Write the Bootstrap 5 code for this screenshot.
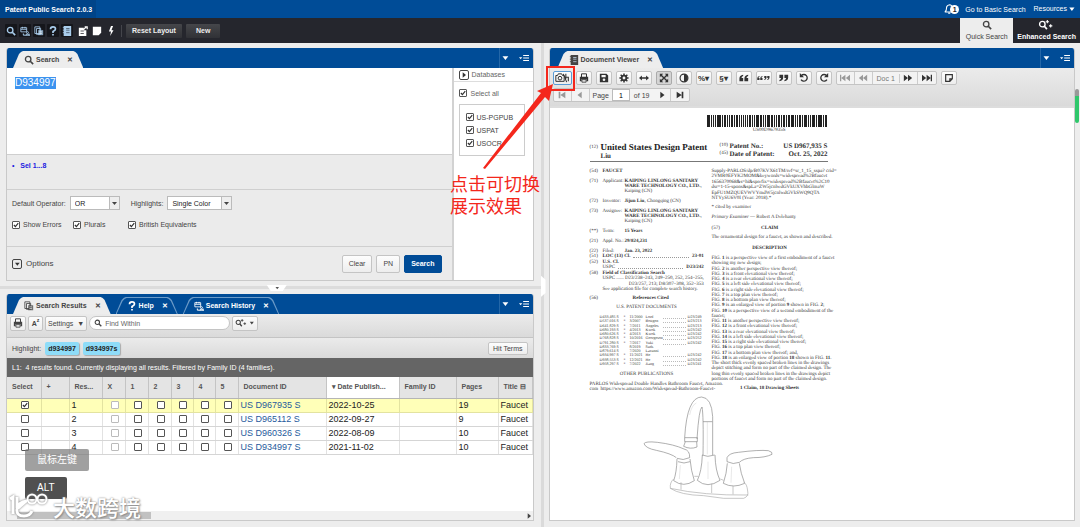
<!DOCTYPE html>
<html lang="en">
<head>
<meta charset="utf-8">
<meta name="viewport" content="width=device-width, initial-scale=1">
<title>Patent Public Search 2.0.3</title>
<link href="https://cdn.jsdelivr.net/npm/bootstrap@5.3.0/dist/css/bootstrap.min.css" rel="stylesheet">
<style>
:root{--blue:#004c97;--line:#c9c9c9;--ink:#444}
body{font:7px/9px "Liberation Sans","Noto Sans CJK SC",sans-serif;color:var(--ink);background:#ededed}
svg.ic{width:10px;height:10px;fill:none;stroke:currentColor;stroke-width:1.6;flex:none;display:block}
svg .f{fill:currentColor;stroke:none}
a{text-decoration:none}
.topbar{background:var(--blue);height:18px;color:#fff}
.topbar a{color:#fff}
.alertno{width:9px;height:9px;border-radius:50%;background:#fff;color:#222;margin-left:-4px;font-weight:700}
.brand-box{background:#004489;height:18px;padding:0 4px 0 5px;font-weight:700}
.toolbar-dark{background:#25262d;height:25px;color:#fff}
.sq{border:0;background:none;color:#fff;width:12px;height:13px;padding:1px;border-radius:1px}
.sq.on{background:#15161b;color:#a9cdec}
.btn-dark2{background:linear-gradient(#45464a,#303136);color:#eee;border:0;border-radius:1px;font-size:7px;line-height:9px;font-weight:700;height:14px;padding:0 6px}
.vsep{width:1px;height:12px;background:#44454b}
.mode{border:0;height:25px;font-size:7px;line-height:9px;padding:2px 4px;background:none;color:#fff;font-weight:700}
.mode.on{background:#ededed;color:#444;width:53px;font-weight:400}
.workspace{padding:5px 5px 6px 6px;min-height:0}
.pane{border:1px solid var(--line);border-top:0;border-radius:3px 3px 0 0;min-width:0;overflow:hidden;background:#fff}
.tabbar{background:var(--blue);height:20px;padding-left:6px;color:#fff}
.tabx{position:relative;height:17px;padding:0 10px 0 11px;gap:2px;font-weight:700;z-index:0;font-size:7px;color:#fff;border:0;background:none}
.tabx .x{margin-left:6px}
.tabx::before,.tabx::after{content:"";position:absolute;z-index:-1;clip-path:polygon(0 100%,6px 3px,8px 1px,10px 0,calc(100% - 10px) 0,calc(100% - 8px) 1px,calc(100% - 6px) 3px,100% 100%)}
.tabx::before{inset:0;background:#6c9bc8}
.tabx::after{inset:1px 1px 0;background:var(--blue)}
.tabx.active{color:var(--ink)}
.tabx.active::before,.tabx.active::after{background:#ededed}
.tabctl{border-left:1px solid #2467a8;height:20px;width:34px}
.ghost{border:0;background:none;color:inherit;padding:0}
.query{border:0;height:86px;padding:9px 8px;font-size:10px;line-height:12px;resize:none;width:100%;color:#111;outline:0;display:block}
.query::selection{background:#3c93ef;color:#fff}
.graybox{background:#ebebeb;border-top:1px solid #cfcfcf}
.status{height:35px;color:#2020e0;font-weight:700;padding:6px 5px}
.opts{height:57px;padding:6px 5px}
.foot{height:34px;padding:0 10px 0 5px;gap:4px}
.cb{appearance:none;width:8px;height:8px;border:1px solid #555;border-radius:1px;background:#fff;margin:0;flex:none;display:block}
.cb:checked{background:#fff url("data:image/svg+xml,%3Csvg xmlns='http://www.w3.org/2000/svg' viewBox='0 0 8 8'%3E%3Cpath d='M1.2 4l2 2.2L7 1.5' fill='none' stroke='%23333' stroke-width='1.6'/%3E%3C/svg%3E")}
.combo{appearance:none;border:1px solid #bbb;border-radius:0;height:14px;font-size:7px;line-height:9px;color:#222;padding:0 12px 0 4px;background:#fff url("data:image/svg+xml,%3Csvg xmlns='http://www.w3.org/2000/svg' width='10' height='12'%3E%3Cpath fill='%23eee' d='M0 0h10v12H0z'/%3E%3Cpath fill='%23bbb' d='M0 0h1v12H0z'/%3E%3Cpath fill='%23444' d='M3 5h5L5.500 8z'/%3E%3C/svg%3E") right top no-repeat}
.dbcol{width:81px;border-left:2px solid #d2d2d2;padding:0 8px 0 5px;background:#fff}
.dbhead{height:14px;margin:0 -8px 0 -5px;padding:0 5px;border-bottom:1px solid #ddd;color:#666}
.dbbox{border:1px solid #ccc;height:52px;padding:0 6px}
.expand{width:10px;height:10px;border:1px solid #444;border-radius:2px;background:none;padding:0;color:#333}
.bx{border:1px solid #c4c4c4;border-radius:2px;background:linear-gradient(#fdfdfd,#ededed);font-size:7px;line-height:9px;color:var(--ink);height:15px;padding:0 4px;display:flex;align-items:center;justify-content:center;flex:none}
.bx.main{background:var(--blue);color:#fff;border-color:var(--blue);font-weight:700}
.tall{height:18px;padding:0 6px}
.grad{background:linear-gradient(#ebebeb,#dadada)}
.rtools{height:24px;padding:0 3px 5px;border-bottom:1px solid #c4c4c4}
.rhl{height:20px;padding:0 5px 0 5px}
.find{width:141px;height:14px;border:1px solid #c4c4c4;border-radius:7px;background:#fff;padding:0 4px}
.find input{border:0;outline:0;font-size:7px;line-height:9px;padding:0;width:110px;background:none}
.find input::placeholder{color:#666}
.chip{background:#8edcf8;color:#222;border-radius:2px;height:13px;padding:2px 3px;box-shadow:1px 1px 1px #aaa;font-weight:700}
.l1{background:#656565;color:#fff;height:19px;padding:0 5px}
.hits{table-layout:fixed;width:100%;border-collapse:collapse;font-size:9px;line-height:10px;color:#222}
.hits th{height:21px;background:#e4e4e4;border-right:1px solid #c4c4c4;border-bottom:1px solid #b5b5b5;font-size:7px;color:#555;padding:0 0 0 5px;white-space:nowrap;overflow:hidden}
.hits td{height:14px;padding:0 0 0 2px;border-right:1px solid #e2e2e2;border-bottom:1px solid #d5d5d5;white-space:nowrap;overflow:hidden}
.hits td .cb{margin:auto}
.hits .dim{border-color:#bbb}
.hits th.sorted{background:#fff}
.hits tr.sel td{background:#ffffb8;border-color:#e3e3a0}
.hits a{color:#1f5a9c}
.hscroll{height:9px;background:#f0f0f0}
.hscroll i{display:block;width:134px;height:7px;background:#c1c1c1;margin-left:10px}
.hsplit{height:13px;margin-left:-6px;position:relative}
.hsplit::before{content:"";position:absolute;left:0;right:-8px;top:5px;height:3px;background:#dcdcdc}
.vsplit{width:15px;position:relative;margin:-5px 0 -6px}
.vsplit::before{content:"";position:absolute;left:7px;width:3px;top:0;bottom:0;background:#dadada}
.grip{position:absolute;border:0;padding:0;background:#fff;color:#555}
.grip.h{left:50%;top:4px;width:20px;height:6px;clip-path:polygon(0 0,100% 0,80% 100%,20% 100%)}
.grip.v{left:7px;top:48%;width:5px;height:22px;clip-path:polygon(0 0,100% 20%,100% 80%,0 100%)}
.dtools{padding:3px 3px 4px;gap:3px}
.dtools .bx{height:14px;width:16px;padding:0;color:#333}
.dtools .grp{border:1px solid #c4c4c4;border-radius:2px;height:14px;background:#f3f3f3}
.dtools .grp .bx{border:0;border-right:1px solid #ccc;border-radius:0;width:18px;height:12px;background:none}
.dtools .off{color:#999!important}
.pageno{width:18px;height:12px;border:1px solid #bbb;font-size:7px;text-align:center;padding:0}
.docview{overflow:hidden;border-top:2px solid #ddd;min-height:0}
/* the scanned front page */
.sheet{width:238px;margin:7px 0 0 40px;font:5px/5px "Liberation Serif",serif;text-rendering:geometricPrecision;color:#333;white-space:nowrap}
.sheet .big{font-size:9px;line-height:10px;font-weight:700;color:#222}
.sheet .mid{font-size:7px;line-height:8px;font-weight:700}
.cols{gap:8px;border-top:1px solid #777;padding-top:7px}
.colL{width:114px}
.colR{width:116px}
.ent{display:grid;grid-template-columns:13px 22px 1fr;margin-bottom:5px}
.ent2{display:grid;grid-template-columns:13px 1fr}
.spread{display:grid;align-content:space-between}
.dots{flex:1;border-bottom:1px dotted #999;margin:0 3px 1px}
.refs{height:51px;font-size:4px;line-height:4px;padding-left:10px}
.refs div{display:grid;grid-template-columns:24px 6px 16px 17px 1fr 16px}
.refs .d{border-bottom:1px dotted #bbb;margin-right:2px}
.note{position:absolute;left:50%;top:0;width:0;height:0;z-index:5;color:#f4271c}
.note svg{position:absolute;left:-60px;top:60px;width:100px;height:112px;overflow:visible}
.note p{position:absolute;left:-90px;top:174px;font-size:18px;line-height:22px;white-space:nowrap;margin:0}
.keys{position:absolute;left:25px;bottom:28px;z-index:5;color:#eee;font-size:10px;line-height:12px}
.keys kbd{font:inherit;display:table;border-radius:2px;padding:5px 12px;background:#505050}
.keys kbd.old{background:rgba(120,120,120,.7);margin-bottom:6px}
.wm{position:absolute;left:9px;bottom:8px;z-index:6;gap:4px;color:#fff;font:500 22px/26px "Noto Sans CJK SC",sans-serif;text-shadow:0 0 2px #888,1px 1px 2px #888}
.wm svg{width:40px;height:26px;filter:drop-shadow(0 0 1px #777)}
.vbar{position:absolute;right:1px;top:89px;width:4px;height:34px;border-radius:2px;background:linear-gradient(#999 7px,#2fc76b 7px)}
</style>
</head>
<body>
<svg class="d-none" xmlns="http://www.w3.org/2000/svg">
<symbol id="mag" viewBox="0 0 12 12"><circle cx="5" cy="5" r="3.300"/><path d="M7.500 7.500L11 11" stroke-width="2"/></symbol>
<symbol id="magplus" viewBox="0 0 20 12"><circle cx="5" cy="5" r="3.300"/><path d="M7.500 7.500L10.500 11" stroke-width="2"/><path d="M9 2h4M11 0v4M13 7h4M15 5v4" stroke-width="1.300"/></symbol>
<symbol id="hist" viewBox="0 0 12 12"><path d="M1 2h7v5H1zM1 4h7M3 1v2M6 1v2" stroke-width="1"/><circle cx="9" cy="8" r="1.200" stroke-width="1"/><path d="M4 9v2h8v-2M7 11q2-2.500 4 0" stroke-width="1.200"/></symbol>
<symbol id="pages" viewBox="0 0 12 12"><path d="M1 1h6v8H1zM3 3h5v7H3z" stroke-width="1"/><path class="f" d="M5 5h6v6H5z" opacity=".75"/><path d="M6.500 7h3M6.500 9h3" stroke="#eee" stroke-width=".8"/></symbol>
<symbol id="book" viewBox="0 0 12 12"><path class="f" d="M2 0h9v12H2z"/><path d="M5 3h4M5 5h4M5 8h4" stroke="#bcd" stroke-width="1"/><path d="M1 2h2M1 5h2M1 8h2" stroke-width="1"/></symbol>
<symbol id="bookdk" viewBox="0 0 12 12"><path class="f" d="M2 0h9v12H2z"/><path d="M5 3h4M5 5h4M5 8h4" stroke="#456" stroke-width="1"/><path d="M1 2h2M1 5h2M1 8h2" stroke-width="1"/></symbol>
<symbol id="edit" viewBox="0 0 12 12"><path class="f" d="M1 2h6v3h3v7H1z"/><path d="M6 5l4-4M8 1h3v3" stroke-width="1.500"/><path d="M3 6h4M3 9h4" stroke="#25262d" stroke-width=".9"/></symbol>
<symbol id="sheetf" viewBox="0 0 12 12"><path class="f" d="M1 1h10v7l-3 3H1z"/></symbol>
<symbol id="bolt" viewBox="0 0 12 12"><path class="f" d="M6 0L3.500 6.500H6L5 12l4-7H6.500L8.500 0z"/></symbol>
<symbol id="bell" viewBox="0 0 12 12"><path d="M1 9.500q2-1 2-4.500T7 1q3 .5 3 4t1.500 4.500zM5 11h2.500" stroke-width="1.300"/></symbol>
<symbol id="ask" viewBox="0 0 12 12"><path d="M3 4q0-3 3-3t3 2.500Q9 5 6 6.500V8.500" stroke-width="2"/><path class="f" d="M5 9.500h2v2H5z"/></symbol>
<symbol id="printer" viewBox="0 0 12 12"><path d="M3 5V1h6v4" stroke-width="1.200"/><path class="f" d="M1 4.500h10V10H9V7.500H3V10H1z"/><path d="M3.500 8v3h5V8z" stroke-width="1"/></symbol>
<symbol id="save" viewBox="0 0 12 12"><path class="f" fill-rule="evenodd" d="M1 1h8l2 2v8H1zM3 2.500V5h5V2.500zM6 6.500a1.600 1.600 0 100 3.200 1.600 1.600 0 000-3.200z"/></symbol>
<symbol id="gear" viewBox="0 0 12 12"><circle cx="6" cy="6" r="2.800" stroke-width="2.200"/><path d="M6 .5v2M6 9.500v2M.5 6h2M9.500 6h2M2 2l1.500 1.500M8.500 8.500L10 10M10 2L8.500 3.500M3.500 8.500L2 10" stroke-width="1.800"/></symbol>
<symbol id="harr" viewBox="0 0 12 12"><path d="M2 6h8" /><path class="f" d="M0 6l3.500-3v6zM12 6L8.500 3v6z"/></symbol>
<symbol id="full" viewBox="0 0 12 12"><path d="M2 2l8 8M10 2l-8 8"/><path class="f" d="M1 1h4L1 5zM11 1v4L7 1zM1 11V7l4 4zM11 11H7l4-4z"/></symbol>
<symbol id="contrast" viewBox="0 0 12 12"><circle cx="6" cy="6" r="4.700" stroke-width="1.400"/><path class="f" d="M6 1.500v9a4.500 4.500 0 000-9z"/></symbol>
<symbol id="oq" viewBox="0 0 6 12"><path class="f" d="M5 2v1.500Q3 4 3 6h2v4H.5V6.500Q.5 2.500 5 2z"/></symbol>
<symbol id="cq" viewBox="0 0 6 12"><path class="f" d="M.5 10V8.500Q2.500 8 2.500 6h-2V2H5v3.500Q5 9.500.5 10z"/></symbol>
<symbol id="undo" viewBox="0 0 12 12"><path d="M3 3a4 4 0 11-.5 5"/><path class="f" d="M1 0v5h5z"/></symbol>
<symbol id="redo" viewBox="0 0 12 12"><path d="M9 3a4 4 0 10.500 5"/><path class="f" d="M11 0v5H6z"/></symbol>
<symbol id="first" viewBox="0 0 12 12"><path class="f" d="M2 2h2v8H2zM10 2v8L4 6z"/></symbol>
<symbol id="last" viewBox="0 0 12 12"><path class="f" d="M8 2h2v8H8zM2 2v8l6-4z"/></symbol>
<symbol id="prev" viewBox="0 0 12 12"><path class="f" d="M8 2v8L3 6z"/></symbol>
<symbol id="next" viewBox="0 0 12 12"><path class="f" d="M4 2v8l5-4z"/></symbol>
<symbol id="first2" viewBox="0 0 12 12"><path class="f" d="M0 2h1.500v8H0zM6.500 2v8l-5-4zM12 2v8L7 6z"/></symbol>
<symbol id="last2" viewBox="0 0 12 12"><path class="f" d="M10.500 2H12v8h-1.500zM0 2v8l5-4zM5.500 2v8l5-4z"/></symbol>
<symbol id="prev2" viewBox="0 0 12 12"><path class="f" d="M6 2v8L1 6zM11 2v8L6 6z"/></symbol>
<symbol id="next2" viewBox="0 0 12 12"><path class="f" d="M1 2v8l5-4zM6 2v8l5-4z"/></symbol>
<symbol id="memo" viewBox="0 0 12 12"><path d="M2 2h8v5l-3 3H2zM7 10V7h3" stroke-width="1.400"/></symbol>
<symbol id="down" viewBox="0 0 12 12"><path class="f" d="M3 4h7L6.500 8.500z"/></symbol>
<symbol id="list" viewBox="0 0 12 12"><path class="f" d="M0 5h4L2 7.500z"/><path d="M5 3h7M5 6h7M5 9h7" stroke-width="1.400"/></symbol>
<symbol id="camera" viewBox="0 0 18 12"><path d="M1 3h2l1-2h4l1 2h2v7H1z" stroke-width="1.200"/><circle cx="6" cy="6.200" r="2.200" stroke-width="1.200"/><path d="M10 1l4 10M13 1v6M12 5h4v5" stroke-width="1.300"/></symbol>
</svg>

<div class="vh-100 d-flex flex-column position-relative overflow-hidden">
<header class="topbar d-flex align-items-center">
  <div class="brand-box d-flex align-items-center">Patent Public Search 2.0.3</div>
  <nav class="ms-auto d-flex align-items-center">
    <button class="ghost d-flex align-items-center" style="margin-right:6px" aria-label="Notifications"><svg class="ic"><use href="#bell"/></svg><span class="alertno">1</span></button>
    <a href="#" class="me-2">Go to Basic Search</a>
    <a href="#" class="d-flex me-1">Resources<svg class="ic" style="width:9px"><use href="#down"/></svg></a>
  </nav>
</header>

<div class="toolbar-dark d-flex align-items-center">
  <div class="d-flex ms-1 align-items-center" style="gap:2px;padding-left:1px">
    <button class="sq on" aria-label="Search"><svg class="ic"><use href="#mag"/></svg></button>
    <button class="sq on" aria-label="History"><svg class="ic"><use href="#hist"/></svg></button>
    <button class="sq on" aria-label="Results"><svg class="ic"><use href="#pages"/></svg></button>
    <button class="sq on" aria-label="Help"><svg class="ic"><use href="#ask"/></svg></button>
    <button class="sq on" aria-label="Viewer"><svg class="ic"><use href="#bookdk"/></svg></button>
    <button class="sq" aria-label="Notes" style="margin-left:2px"><svg class="ic"><use href="#edit"/></svg></button>
    <button class="sq" aria-label="Sheet"><svg class="ic"><use href="#sheetf"/></svg></button>
    <button class="sq" aria-label="Quick action"><svg class="ic"><use href="#bolt"/></svg></button>
  </div>
  <span class="vsep mx-1"></span>
  <button class="btn-dark2">Reset Layout</button>
  <button class="btn-dark2 ms-1" style="padding:0 10px">New</button>
  <button class="mode on ms-auto d-flex flex-column align-items-center justify-content-between text-nowrap"><svg class="ic"><use href="#mag"/></svg>Quick Search</button>
  <button class="mode d-flex flex-column align-items-center justify-content-between text-nowrap"><svg class="ic" style="width:17px"><use href="#magplus"/></svg>Enhanced Search</button>
</div>

<main class="workspace d-flex flex-fill">
<div class="d-flex flex-column" style="flex:528 1 0;min-width:0">
  <section class="pane" style="flex:none">
    <div class="tabbar d-flex align-items-end">
      <button class="tabx active d-flex align-items-center"><svg class="ic"><use href="#mag"/></svg>Search<span class="x">✕</span></button>
      <div class="tabctl ms-auto d-flex align-items-center justify-content-between pe-1"><button class="ghost" aria-label="Menu"><svg class="ic"><use href="#down"/></svg></button><button class="ghost" aria-label="Panel options"><svg class="ic"><use href="#list"/></svg></button></div>
    </div>
    <div class="d-flex">
      <div class="flex-fill">
        <textarea class="query" id="query" aria-label="Query" spellcheck="false">D934997</textarea>
        <div class="graybox status">•&nbsp;&nbsp; Sel 1...8</div>
        <div class="graybox opts">
          <div class="d-flex align-items-center">
            <label for="op" class="me-1">Default Operator:</label><select class="combo" id="op" style="width:50px"><option>OR</option></select>
            <label for="hl" style="margin:0 4px 0 11px">Highlights:</label><select class="combo" id="hl" style="width:65px"><option>Single Color</option></select>
          </div>
          <div class="d-flex align-items-center" style="margin-top:10px;gap:3px">
            <input class="cb" type="checkbox" id="c1" checked><label for="c1" style="width:47px">Show Errors</label>
            <input class="cb" type="checkbox" id="c2" checked><label for="c2" style="width:41px">Plurals</label>
            <input class="cb" type="checkbox" id="c3" checked><label for="c3">British Equivalents</label>
          </div>
        </div>
        <div class="graybox foot d-flex align-items-center">
          <button class="expand" aria-label="Expand options"><svg class="ic w-100" style="height:8px"><use href="#down"/></svg></button><span class="me-auto" style="font-size:8px">Options</span>
          <button class="bx tall">Clear</button><button class="bx tall">PN</button><button class="bx main tall">Search</button>
        </div>
      </div>
      <aside class="dbcol">
        <div class="dbhead d-flex align-items-center" style="gap:3px"><button class="expand" aria-label="Expand databases"><svg class="ic w-100" style="height:8px"><use href="#next"/></svg></button>Databases</div>
        <div class="d-flex align-items-center" style="gap:4px;height:22px;color:#666"><input class="cb" type="checkbox" id="d0" checked><label for="d0">Select all</label></div>
        <div class="dbbox d-flex flex-column justify-content-center" style="gap:4px">
          <div class="d-flex align-items-center" style="gap:3px"><input class="cb" type="checkbox" id="d1" checked><label for="d1">US-PGPUB</label></div>
          <div class="d-flex align-items-center" style="gap:3px"><input class="cb" type="checkbox" id="d2" checked><label for="d2">USPAT</label></div>
          <div class="d-flex align-items-center" style="gap:3px"><input class="cb" type="checkbox" id="d3" checked><label for="d3">USOCR</label></div>
        </div>
      </aside>
    </div>
  </section>

  <div class="hsplit"><button class="grip h d-flex justify-content-center" aria-label="Resize"><svg class="ic" style="height:6px"><use href="#down"/></svg></button></div>

  <section class="pane d-flex flex-column flex-fill" style="min-height:0">
    <div class="tabbar d-flex align-items-end" style="gap:5px">
      <button class="tabx active d-flex align-items-center"><svg class="ic"><use href="#pages"/></svg>Search Results<span class="x">✕</span></button>
      <button class="tabx d-flex align-items-center"><svg class="ic"><use href="#ask"/></svg>Help<span class="x">✕</span></button>
      <button class="tabx d-flex align-items-center"><svg class="ic"><use href="#hist"/></svg>Search History<span class="x">✕</span></button>
      <div class="tabctl ms-auto d-flex align-items-center justify-content-between pe-1"><button class="ghost" aria-label="Menu"><svg class="ic"><use href="#down"/></svg></button><button class="ghost" aria-label="Panel options"><svg class="ic"><use href="#list"/></svg></button></div>
    </div>
    <div class="grad rtools d-flex align-items-center" style="gap:2px">
      <button class="bx" style="padding:0 2px" aria-label="Print"><svg class="ic"><use href="#printer"/></svg></button>
      <button class="bx fw-bold" style="width:15px;padding:0">A<sup>z</sup></button>
      <button class="bx" style="padding:0 2px">Settings&nbsp; ▼</button>
      <div class="find d-flex align-items-center" style="gap:3px"><svg class="ic" style="width:8px"><use href="#mag"/></svg><input id="find" aria-label="Find Within" placeholder="Find Within"></div>
      <button class="bx" style="padding:0 2px" aria-label="Search options"><svg class="ic" style="width:13px"><use href="#magplus"/></svg><svg class="ic" style="width:7px"><use href="#down"/></svg></button>
    </div>
    <div class="grad rhl d-flex align-items-center" style="gap:4px">Highlight:<span class="chip">d934997</span><span class="chip">d934997s</span><button class="bx ms-auto" style="height:13px">Hit Terms</button></div>
    <div class="l1 d-flex align-items-center">L1:&nbsp; 4 results found. Currently displaying all results. Filtered by Family ID (4 families).</div>
    <table class="hits">
      <colgroup><col style="width:34px"><col style="width:28px"><col style="width:33px"><col style="width:23px"><col style="width:23px"><col style="width:23px"><col style="width:22px"><col style="width:22px"><col style="width:23px"><col><col style="width:73px"><col style="width:57px"><col style="width:42px"><col style="width:34px"></colgroup>
      <thead><tr><th>Select</th><th>+</th><th>Res...</th><th>X</th><th>1</th><th>2</th><th>3</th><th>4</th><th>5</th><th>Document ID</th><th class="sorted">▾ Date Publish...</th><th>Family ID</th><th>Pages</th><th>Title ⊟</th></tr></thead>
      <tbody id="rows"></tbody>
    </table>
    <div class="hscroll mt-auto d-flex align-items-center"><i></i><svg class="ic ms-auto" style="width:8px"><use href="#next"/></svg></div>
  </section>
</div>

<div class="vsplit flex-shrink-0"><button class="grip v" aria-label="Resize columns"></button></div>

<section class="pane d-flex flex-column" style="flex:525 1 0">
  <div class="tabbar d-flex align-items-end">
    <button class="tabx active d-flex align-items-center" style="margin-left:2px"><svg class="ic"><use href="#book"/></svg>Document Viewer<span class="x">✕</span></button>
    <div class="tabctl ms-auto d-flex align-items-center justify-content-between pe-1"><button class="ghost" aria-label="Menu"><svg class="ic"><use href="#down"/></svg></button><button class="ghost" aria-label="Panel options"><svg class="ic"><use href="#list"/></svg></button></div>
  </div>
  <div class="grad dtools d-flex flex-column">
    <div class="d-flex" style="gap:4px">
      <button class="bx" style="width:19px;border-color:#5b9bd5" aria-label="Image or text"><svg class="ic" style="width:15px"><use href="#camera"/></svg></button>
      <button class="bx" aria-label="Print"><svg class="ic"><use href="#printer"/></svg></button>
      <button class="bx" aria-label="Save"><svg class="ic"><use href="#save"/></svg></button>
      <button class="bx" aria-label="Settings"><svg class="ic"><use href="#gear"/></svg></button>
      <button class="bx" aria-label="Fit width"><svg class="ic"><use href="#harr"/></svg></button>
      <button class="bx" style="background:#d4d4d4;border-color:#aaa" aria-label="Fit page"><svg class="ic"><use href="#full"/></svg></button>
      <button class="bx" aria-label="Contrast"><svg class="ic"><use href="#contrast"/></svg></button>
      <button class="bx fw-bold" style="font-size:8px">%▾</button>
      <button class="bx fw-bold" style="font-size:8px">§▾</button>
      <button class="bx" aria-label="Open quote"><svg class="ic" style="width:5px"><use href="#oq"/></svg><svg class="ic" style="width:5px"><use href="#oq"/></svg></button>
      <button class="bx" aria-label="Quote"><svg class="ic" style="width:3px"><use href="#oq"/></svg><svg class="ic" style="width:3px"><use href="#oq"/></svg><svg class="ic" style="width:3px;margin-left:1px"><use href="#cq"/></svg><svg class="ic" style="width:3px"><use href="#cq"/></svg></button>
      <button class="bx" aria-label="Close quote"><svg class="ic" style="width:5px"><use href="#cq"/></svg><svg class="ic" style="width:5px"><use href="#cq"/></svg></button>
      <button class="bx" aria-label="Rotate left"><svg class="ic"><use href="#undo"/></svg></button>
      <button class="bx" aria-label="Rotate right"><svg class="ic"><use href="#redo"/></svg></button>
      <div class="grp d-flex align-items-center"><button class="bx off" aria-label="First document"><svg class="ic"><use href="#first2"/></svg></button><button class="bx off" aria-label="Previous document"><svg class="ic"><use href="#prev2"/></svg></button><span class="px-1" style="color:#777;border-right:1px solid #ccc">Doc 1</span><button class="bx" aria-label="Next document"><svg class="ic"><use href="#next2"/></svg></button><button class="bx border-0" aria-label="Last document"><svg class="ic"><use href="#last2"/></svg></button></div>
      <button class="bx" aria-label="Note"><svg class="ic"><use href="#memo"/></svg></button>
    </div>
    <div class="d-flex">
      <div class="grp d-flex align-items-center"><button class="bx off" aria-label="First page"><svg class="ic"><use href="#first"/></svg></button><button class="bx off" aria-label="Previous page"><svg class="ic"><use href="#prev"/></svg></button><label for="pg" style="padding:0 3px">Page</label><input class="pageno" id="pg" value="1"><span style="padding:0 4px">of 19</span><button class="bx" aria-label="Next page"><svg class="ic"><use href="#next"/></svg></button><button class="bx border-0" aria-label="Last page"><svg class="ic"><use href="#last"/></svg></button></div>
    </div>
  </div>
  <div class="docview flex-fill bg-white">
    <article class="sheet">
      <div class="d-flex flex-column align-items-end"><svg id="bars" width="121" height="12" shape-rendering="crispEdges"></svg><span style="padding-right:42px;margin-top:1px">US00D967935S</span></div>
      <div class="d-flex" style="margin-top:9px;height:19px">
        <div style="width:130px"><div class="d-flex align-items-center"><span style="width:11px">(12)</span><span class="big">United States Design Patent</span></div><div class="mid" style="padding-left:11px">Liu</div></div>
        <div class="flex-fill"><div class="d-flex mid"><span class="fw-normal" style="width:10px;font-size:5px">(10)</span>Patent No.:<span class="ms-auto">US D967,935 S</span></div><div class="d-flex mid"><span class="fw-normal" style="width:10px;font-size:5px">(45)</span>Date of Patent:<span class="ms-auto">Oct. 25, 2022</span></div></div>
      </div>
      <div class="cols d-flex">
        <div class="colL">
          <div class="ent"><span>(54)</span><b>FAUCET</b></div>
          <div class="ent"><span>(71)</span><span>Applicant:</span><span><b>KAIPING LINLONG SANITARY<br>WARE TECHNOLOGY CO., LTD.</b>,<br>Kaiping (CN)</span></div>
          <div class="ent"><span>(72)</span><span>Inventor:</span><span><b>Jijun Liu</b>, Chongqing (CN)</span></div>
          <div class="ent"><span>(73)</span><span>Assignee:</span><span><b>KAIPING LINLONG SANITARY<br>WARE TECHNOLOGY CO., LTD.</b>,<br>Kaiping (CN)</span></div>
          <div class="ent"><span>(**)</span><span>Term:</span><b>15 Years</b></div>
          <div class="ent"><span>(21)</span><span>Appl. No.:</span><b>29/824,231</b></div>
          <div class="ent mb-0"><span>(22)</span><span>Filed:</span><b>Jan. 23, 2022</b></div>
          <div class="spread" style="height:38px">
            <div class="ent2"><span>(51)</span><span class="d-flex"><b>LOC (13) Cl.</b><i class="dots"></i><b>23-01</b></span></div>
            <div class="ent2"><span>(52)</span><b>U.S. Cl.</b></div>
            <div class="ent2"><span></span><span class="d-flex">USPC<i class="dots"></i><b>D23/242</b></span></div>
            <div class="ent2"><span>(58)</span><b>Field of Classification Search</b></div>
            <div class="ent2"><span></span><span>USPC ...... D23/238–243, 249–250, 252, 254–255,</span></div>
            <div class="ent2"><span></span><span class="text-end">D23/257, 213; D8/307–308, 352–353</span></div>
            <div class="ent2"><span></span><span>See application file for complete search history.</span></div>
          </div>
          <div class="d-flex" style="margin-top:4px"><span>(56)</span><b class="flex-fill text-center">References Cited</b></div>
          <div class="text-center" style="margin:4px 0 5px">U.S. PATENT DOCUMENTS</div>
          <div class="refs spread" id="refs"></div>
          <div class="text-center" style="margin:6px 0 5px">OTHER PUBLICATIONS</div>
          <div>PARLOS Widespread Double Handles Bathroom Faucet, Amazon.<br>com &nbsp;https://www.amazon.com/Widespread-Bathroom-Faucet-</div>
        </div>
        <div class="colR">
          <div class="spread" style="height:32px"><span>Supply-PARLOS/dp/B07KVX61TM/ref=sr_1_15_sspa? crid=</span><span>2VMR0EFYK2MOM&amp;keywords=widespread%2Bfaucet</span><span>1656370068&amp;s=hi&amp;sprefix=widespread%2Bfaucet%2C10</span><span>dsr=1-15-spons&amp;spLa=ZW5jcnlwdGVkUXVhbGlmaW</span><span>EpFU1MZQUEVWVYmdW5jcnlwdGVkSWQ9QTA</span><span>NTYySU6V0I (Year: 2018).*</span></div>
          <div style="margin-top:4px">* cited by examiner</div>
          <div style="margin-top:5px"><i>Primary Examiner</i> — Robert A Delehanty</div>
          <div class="d-flex" style="margin-top:6px"><span>(57)</span><b class="flex-fill text-center pe-2">CLAIM</b></div>
          <div style="margin-top:4px">The ornamental design for a faucet, as shown and described.</div>
          <div class="text-center fw-bold" style="margin:6px 0 5px">DESCRIPTION</div>
          <div class="spread" style="height:126px" id="figs"></div>
          <div class="text-center fw-bold" style="margin-top:4px">1 Claim, 18 Drawing Sheets</div>
        </div>
      </div>
      <svg viewBox="10 440 390 315" width="130" height="105" style="display:block;margin:3px 0 0 53px" fill="none" stroke="#888" stroke-width="2" stroke-linejoin="round">
        <path d="M135 568Q142 446 186 446Q216 448 219 505V620M172 572Q178 480 187 476Q192 500 190 620"/>
        <path d="M135 568h38v12h-38zM137 580l-5 14q20 10 40 2l-1-16M190 520h28M187 620q16 8 38 0M188 620q-2 50-15 76q30 26 68 0q-14-30-15-76"/>
        <path d="M110 628q-14-12-60-22q-32-6-37-20q4-8 40-4q50 6 80 20q18 4 17 26q-20 10-38 2M112 632q-1 40-10 65q30 22 62 0q-10-30-13-65M115 640q18 8 36 0"/>
        <path d="M262 640v-12q6-14 34-16q62-8 90-5q14 4 11 11q-20 10-56 10q-30 2-42 14q-18 8-37-2M263 645q-2 30-12 60q30 16 64 0q-12-30-16-60"/>
        <path d="M102 692q-12 10-10 28q30 20 100 22q60 12 120 8q16-6 12-22q-2-22-12-26M92 720q100 22 234 20M124 702v22M164 684l12 0M242 692l10 4M216 706v28M280 712v26" stroke="#aaa"/>
        <path d="M203 520v98M122 650l-3 42M205 640v52M276 655l-2 48M150 500q6-30 20-36" stroke="#bbb" stroke-width="1"/>
      </svg>
    </article>
  </div>
</section>
</main>

<div class="note"><svg viewBox="480 60 100 112"><rect x="547" y="67" width="27" height="23" fill="none" stroke="currentColor" stroke-width="2"/><path fill="currentColor" d="M483 168L541 93L537 91L553 84L549 101L545 97L485 169z"/></svg><p>点击可切换<br>展示效果</p></div>
<div class="keys"><kbd class="old">鼠标左键</kbd><kbd>ALT</kbd></div>
<div class="wm d-flex align-items-center"><svg viewBox="0 0 40 26" fill="none" stroke="#fff" stroke-width="3"><path d="M1 6l3-2v17M8 4v11M18 8q-9 1-10 8t7 7q6 0 8-5M9 15l8-7"/><circle cx="23" cy="6" r="4.500" stroke-width="2"/><circle cx="33" cy="6" r="4.500" stroke-width="2"/></svg>大数跨境</div>
<div class="vbar"></div>
</div>

<script src="https://cdn.jsdelivr.net/npm/bootstrap@5.3.0/dist/js/bootstrap.bundle.min.js"></script>
<script>
const hits=[["US D967935 S","2022-10-25",19],["US D965112 S","2022-09-27",9],["US D960326 S","2022-08-09",10],["US D934997 S","2021-11-02",10]];
const box=(label,extra="")=>`<td><input type="checkbox" class="cb ${extra}" aria-label="${label}"${extra==="x"?" checked":""}></td>`;
document.getElementById("rows").innerHTML=hits.map((h,i)=>`<tr class="${i?"":"sel"}">${box("Select "+h[0],i?"":"x")}<td></td><td>${i+1}</td>${box("X","dim")}${[1,2,3,4,5].map(n=>box("Tag "+n)).join("")}<td><a href="#">${h[0]}</a></td><td>${h[1]}</td><td></td><td>${h[2]}</td><td>Faucet</td></tr>`).join("");
const refs=["D433,485 S|*|11/2000|Lord|D23/249","D537,016 S|*|3/2007|Bottgen|D23/213","D641,829 S|*|7/2011|Angeles|D23/213","D680,193 S|*|4/2013|Kwok|D23/242","D680,626 S|*|4/2013|Kwok|D23/242","D768,828 S|*|10/2016|Georgeson|D23/252","D791,280 S|*|7/2017|Yuki|D23/242","D833,769 S||8/2019|Suds|","D879,614 S||7/2020|Lacunni|","D934,997 S|*|11/2021|He|D23/242","D938,553 S|*|12/2021|He|D23/242","D958,297 S|*|7/2022|Jiang|D23/241"];
document.getElementById("refs").innerHTML=refs.map(r=>{const[a,b,c,d,e]=r.split("|");return `<div><span>${a}</span><span>${b}</span><span>${c}</span><span>${d}</span><span class="${e?"d":""}"></span><span>${e}</span></div>`}).join("");
const figs=["FIG. *1* is a perspective view of a first embodiment of a faucet","showing my new design;","FIG. *2* is another perspective view thereof;","FIG. *3* is a front elevational view thereof;","FIG. *4* is a rear elevational view thereof;","FIG. *5* is a left side elevational view thereof;","FIG. *6* is a right side elevational view thereof;","FIG. *7* is a top plan view thereof;","FIG. *8* is a bottom plan view thereof;","FIG. *9* is an enlarged view of portion *9* shown in FIG. *2*;","FIG. *10* is a perspective view of a second embodiment of the","faucet;","FIG. *11* is another perspective view thereof;","FIG. *12* is a front elevational view thereof;","FIG. *13* is a rear elevational view thereof;","FIG. *14* is a left side elevational view thereof;","FIG. *15* is a right side elevational view thereof;","FIG. *16* is a top plan view thereof;","FIG. *17* is a bottom plan view thereof; and,","FIG. *18* is an enlarged view of portion *18* shown in FIG. *11*.","The short thick evenly spaced broken lines in the drawings","depict stitching and form no part of the claimed design. The","long thin evenly spaced broken lines in the drawings depict","portions of faucet and form no part of the claimed design."];
document.getElementById("figs").innerHTML=figs.map(f=>`<span>${f.replace(/\*(\d+)\*/g,"<b>$1</b>")}</span>`).join("");
const code="3112131141122113112113211411121311221411312112113121141123112";
let x=0,bars="";for(let i=0;x<121;i++){const w=+code[i%code.length];if(i%2===0)bars+=`<rect x="${x}" width="${w}" height="12" fill="#222"/>`;x+=i%2?1:w}
document.getElementById("bars").innerHTML=bars;
const q=document.getElementById("query");q.focus();q.select();
</script>
</body>
</html>
